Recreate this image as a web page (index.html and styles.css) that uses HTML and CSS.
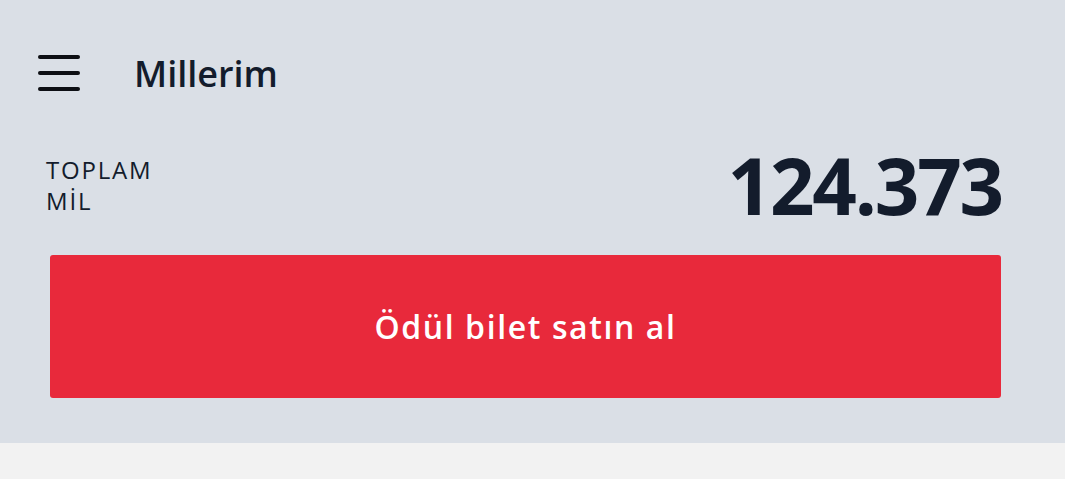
FILE: index.html
```html
<!DOCTYPE html>
<html lang="tr">
<head>
<meta charset="utf-8">
<link rel="stylesheet" href="styles.css">
</head>
<body>
<div class="panel">
  <header class="topbar">
    <span class="menu" aria-label="menu">
      <span class="bar"></span><span class="bar"></span><span class="bar"></span>
    </span>
    <h1 class="title">Millerim</h1>
  </header>
  <div class="summary">
    <div class="label">TOPLAM<br>MİL</div>
    <div class="total">124.373</div>
  </div>
  <button class="cta">Ödül bilet satın al</button>
</div>
<div class="footer"></div>
</body>
</html>
```
FILE: styles.css
```css
html, body {
  margin: 0;
  padding: 0;
}
body {
  background: #f2f2f2;
  font-family: "Open Sans", "Noto Sans", sans-serif;
  color: #131c2c;
  height: 479px;
  overflow: hidden;
}
.panel {
  background: #dadfe6;
  height: 443px;
  box-sizing: border-box;
  padding-top: 51px;
}
.topbar {
  display: flex;
  align-items: center;
  height: 44px;
}
.menu {
  display: flex;
  flex-direction: column;
  gap: 12px;
  width: 42px;
  margin-left: 38px;
}
.bar {
  display: block;
  height: 4px;
  border-radius: 2px;
  background: #0d0f14;
}
.title {
  margin: 0 0 0 54px;
  font-size: 36px;
  font-weight: 600;
  letter-spacing: 0;
}
.summary {
  display: flex;
  justify-content: space-between;
  align-items: center;
  margin-top: 52px;
  padding: 0 63px 0 46px;
  height: 76px;
}
.label {
  font-size: 24px;
  line-height: 31px;
  font-weight: 400;
  letter-spacing: 1.8px;
}
.total {
  font-size: 78px;
  font-weight: 700;
  line-height: 1;
  letter-spacing: -2.2px;
}
.cta {
  display: block;
  margin: 32px 64px 0 50px;
  width: calc(100% - 114px);
  height: 143px;
  border: 0;
  border-radius: 3px;
  background: #e8293b;
  color: #fff;
  font-family: inherit;
  font-size: 32px;
  font-weight: 600;
  letter-spacing: 1.6px;
  padding: 0;
}
.footer {
  height: 36px;
}
```
